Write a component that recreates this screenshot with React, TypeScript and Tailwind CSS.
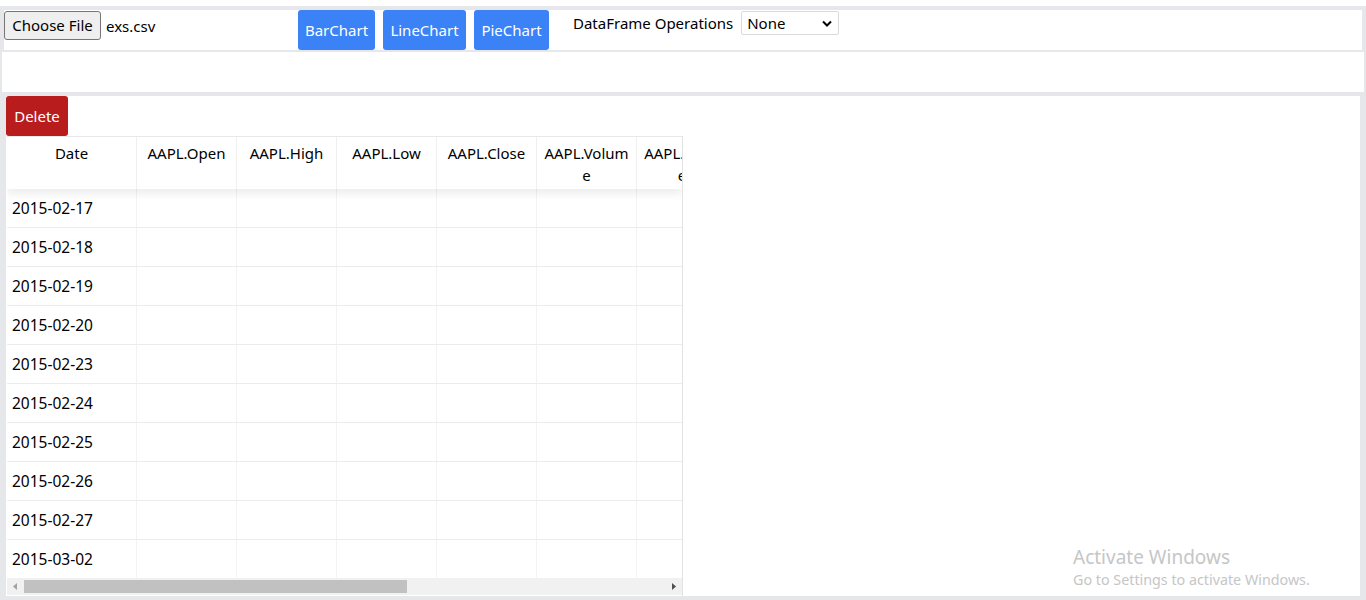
import React from "react"

const columns = [
  "AAPL.Open",
  "AAPL.High",
  "AAPL.Low",
  "AAPL.Close",
  "AAPL.Volume",
  "AAPL.Adjusted",
]

const dates = [
  "2015-02-17",
  "2015-02-18",
  "2015-02-19",
  "2015-02-20",
  "2015-02-23",
  "2015-02-24",
  "2015-02-25",
  "2015-02-26",
  "2015-02-27",
  "2015-03-02",
]

function Toolbar() {
  return (
    <div className="ml-[4px] mt-[4px] w-[1358px] h-[40px] bg-white flex items-start shrink-0">
      <div className="w-[286px] flex items-start">
        <button className="mt-[1px] w-[97px] h-[29px] bg-[#efefef] border border-[#767676] rounded-[3px] text-[15px] text-black leading-none">
          Choose File
        </button>
        <span className="ml-[5px] mt-[5px] text-[15px] leading-[22px] text-black">exs.csv</span>
      </div>
      <div className="ml-[8px] flex gap-[8px]">
        <button className="w-[77px] h-[40px] bg-[#3b82f6] text-white text-[15px] rounded-[3px]">BarChart</button>
        <button className="w-[83px] h-[40px] bg-[#3b82f6] text-white text-[15px] rounded-[3px]">LineChart</button>
        <button className="w-[75px] h-[40px] bg-[#3b82f6] text-white text-[15px] rounded-[3px]">PieChart</button>
      </div>
      <span className="ml-[24px] mt-[2px] text-[15px] leading-[22px] text-black">DataFrame Operations</span>
      <div className="ml-[8px] mt-[1px] w-[98px] h-[24px] border border-[#dadada] rounded-[2px] flex items-center justify-between pl-[5px] pr-[6px]">
        <span className="text-[15px] leading-none text-black">None</span>
        <svg width="10" height="7" viewBox="0 0 10 7">
          <path d="M1 1.5 L5 5.5 L9 1.5" fill="none" stroke="#000" strokeWidth="2" />
        </svg>
      </div>
    </div>
  )
}

function DataTable() {
  return (
    <div className="ml-[1px] w-[676px] h-[460px] border-r border-[#e3e3e3] overflow-hidden flex flex-col">
      <div className="flex-1 overflow-hidden flex flex-col">
        <div className="flex shrink-0 h-[53px] border-t border-[#e8e8e8] bg-white relative z-10 shadow-[0_5px_8px_rgba(0,0,0,0.07)]">
          <div className="w-[130px] shrink-0 border-r border-[#f0f0f0] text-center pt-[5px] leading-[22px] text-[15px] text-black">
            Date
          </div>
          {columns.map((c) => (
            <div
              key={c}
              className="w-[100px] shrink-0 border-r border-[#f0f0f0] text-center px-[7px] pt-[5px] leading-[22px] text-[15px] text-black break-all"
            >
              {c}
            </div>
          ))}
        </div>
        <div className="flex-1 overflow-hidden">
          {dates.map((d) => (
            <div key={d} className="flex h-[39px] border-b border-[#ececec]">
              <div className="w-[130px] shrink-0 border-r border-[#f3f3f3] pl-[5px] pt-[2px] flex items-center text-[15.5px] text-black">
                {d}
              </div>
              {columns.map((c) => (
                <div key={c} className="w-[100px] shrink-0 border-r border-[#f3f3f3]" />
              ))}
            </div>
          ))}
        </div>
      </div>
      <div className="h-[17px] shrink-0 bg-[#f1f1f1] flex items-center">
        <svg width="17" height="17" viewBox="0 0 17 17" className="shrink-0">
          <path d="M6 8.5 L10 5 L10 12 Z" fill="#a3a3a3" />
        </svg>
        <div className="w-[383px] h-[13px] bg-[#c1c1c1]" />
        <div className="flex-1" />
        <svg width="17" height="17" viewBox="0 0 17 17" className="shrink-0">
          <path d="M11 8.5 L7 5 L7 12 Z" fill="#505050" />
        </svg>
      </div>
      <div className="h-[1px] shrink-0 bg-white" />
    </div>
  )
}

export default function App() {
  return (
    <div className="w-[1366px] h-[600px] bg-[#e6e7eb] overflow-hidden flex flex-col font-['Noto_Sans',sans-serif]">
      <div className="h-[6px] bg-white shrink-0" />
      <Toolbar />
      <div className="ml-[2px] mt-[2px] w-[1362px] h-[40px] bg-white shrink-0" />
      <div className="ml-[6px] mt-[4px] w-[1354px] h-[500px] bg-white relative shrink-0">
        <button className="w-[62px] h-[40px] bg-[#b91c1c] text-white text-[15px] rounded-[3px] block">
          Delete
        </button>
        <DataTable />
        <div className="absolute left-[1067px] top-[449px] text-[#c6c6c6]">
          <div className="text-[19px] leading-[24px]">Activate Windows</div>
          <div className="text-[14.3px] leading-[22px]">Go to Settings to activate Windows.</div>
        </div>
      </div>
    </div>
  )
}
